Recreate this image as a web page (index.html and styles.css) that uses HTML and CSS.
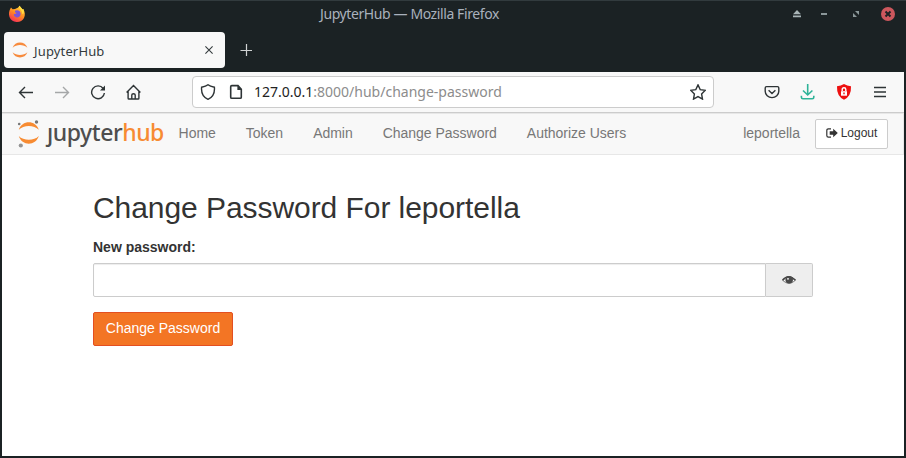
FILE: index.html
```html
<!DOCTYPE html>
<html lang="en">
<head>
<meta charset="utf-8">
<title>JupyterHub</title>
<link rel="stylesheet" href="styles.css">
</head>
<body>
<div class="window">
  <header class="titlebar">
    <svg class="firefox" width="18" height="18" viewBox="0 0 18 18">
      <defs><linearGradient id="fire" x1="0.8" y1="0" x2="0.25" y2="1"><stop offset="0" stop-color="#ffdf3c"/><stop offset=".5" stop-color="#ff8c22"/><stop offset="1" stop-color="#f52b58"/></linearGradient></defs>
      <path d="M2.2 4 3 2.6 4.6 4.2 7 4 9.8 2.8 11.7.8C12 3 14 3.6 14.6 4.4L15.3 4C17 7 17.4 10 16 13A8 7.6 0 0 1 1.5 12C.5 9 1 6 2.2 4Z" fill="url(#fire)"/>
      <path d="M7 5.8C9 4.6 12.6 5.4 12.6 8.8 12.6 12 9.8 13 8 12.2 6.4 11.5 5.4 10 6 9 7 9.2 8 8.8 8.6 7.9L7 7.2Z" fill="#7b54d8"/>
      <path d="M11 1.5C11.2 4 14.5 5 14.3 9 15.8 9 16.4 7 15.3 4L14.6 4.4 11.7.8Z" fill="#ffe043"/>
    </svg>
    <div class="window-title">JupyterHub — Mozilla Firefox</div>
    <div class="controls">
      <svg width="10" height="10" viewBox="0 0 10 10" fill="#a9b5b7"><path d="M5 1 9 5.3H1ZM1 6.4h8v1.8H1Z"/></svg>
      <svg width="8" height="10" viewBox="0 0 8 10" fill="#8b9799"><path d="M1 4h6v2H1Z"/></svg>
      <svg width="8" height="10" viewBox="0 0 8 10" fill="#8b9799"><path d="M3 2h4v4ZM1 4l4 4H1Z"/></svg>
      <svg width="14" height="14" viewBox="0 0 14 14"><circle cx="7" cy="7" r="7" fill="#cc575d"/><path d="m4.5 4.5 5 5m0-5-5 5" stroke="#1b2224" stroke-width="2"/></svg>
    </div>
  </header>
  <div class="tabs">
    <div class="tab">
      <svg width="16" height="16" viewBox="0 0 16 16" fill="#f78b3d"><path d="M.6 5.7C2.8-1.2 13.2-1.2 15.4 5.7 11.5 2.2 4.5 2.2.6 5.7ZM.6 10.3C2.8 17.2 13.2 17.2 15.4 10.3 11.5 13.8 4.5 13.8.6 10.3Z"/></svg>
      <span class="tab-title">JupyterHub</span>
      <svg width="8" height="8" viewBox="0 0 8 8" fill="none" stroke="#343b3d" stroke-width="1.1"><path d="m.4.4 7.2 7.2m0-7.2L.4 7.6"/></svg>
    </div>
    <svg class="new-tab" width="12" height="12" viewBox="0 0 12 12" stroke="#d0d3d3" stroke-width="1.2"><path d="M6.5 0v12M.5 6.5h11.5"/></svg>
  </div>
  <div class="toolbar">
    <span class="tool"><svg width="16" height="16" viewBox="0 0 16 16"><path d="M15 8.5H1.6M7 3 1.5 8.5 7 14"/></svg></span>
    <span class="tool disabled"><svg width="16" height="16" viewBox="0 0 16 16"><path d="M1 8.5h13.4M9 3l5.5 5.5L9 14"/></svg></span>
    <span class="tool"><svg width="16" height="16" viewBox="0 0 16 16"><path d="M13.2 4.5A6.4 6.4 0 1 0 14.4 9"/><path class="solid" d="M15 1.5v5H10Z"/></svg></span>
    <span class="tool"><svg width="16" height="16" viewBox="0 0 16 16"><path d="M.6 8.4 7.5 1.5l6.9 6.9M2.1 7v7.2q0 .8.8.8h9.2q.8 0 .8-.8V7M5.8 15v-4q0-1.2 1.7-1.2t1.7 1.2v4"/></svg></span>
    <div class="urlbar">
      <svg width="16" height="16" viewBox="0 0 16 16"><path d="M8 .8Q10 2.5 14.4 3.2 15.2 12 8 15.3.8 12 1.6 3.2 6 2.5 8 .8Z"/></svg>
      <svg class="page-icon" width="14" height="16" viewBox="0 0 14 16"><path stroke-width="1.6" d="M9 1.6H2.8Q1.7 1.6 1.7 2.7v10.5q0 1.1 1.1 1.1h8.4q1.1 0 1.1-1.1V5.4Z"/><path class="solid" d="M8.4 1.5V6h4.2Z"/></svg>
      <span class="url"><b>127.0.0.1</b>:8000/hub/change-password</span>
      <svg width="16" height="16" viewBox="0 0 16 16"><path d="m8 .9 2.2 4.7 5.1.7-3.7 3.6.9 5.2L8 12.6l-4.5 2.5.9-5.2L.7 6.3l5.1-.7Z"/></svg>
    </div>
    <span class="tool"><svg width="16" height="16" viewBox="0 0 16 16"><path d="M2.5 2.6h11q1.3 0 1.3 1.3v3.3A6.8 6.4 0 0 1 1.2 7.2V3.9q0-1.3 1.3-1.3ZM4.6 6.3 8 9.5l3.4-3.2"/></svg></span>
    <span class="tool download"><svg width="16" height="16" viewBox="0 0 16 16"><path d="M7.7 0v11M3 6.5 7.7 11l4.7-4.5M1.4 11.7v1.6q0 1.5 1.5 1.5h9.4q1.5 0 1.5-1.5v-1.6"/></svg></span>
    <span class="tool"><svg width="16" height="16" viewBox="0 0 16 16"><path d="M8 0Q11 2 15 2.2 15.5 12 8 15.8.5 12 1 2.2 5 2 8 0Z" fill="#ed1010" stroke="none"/><path d="M5 7.2h6v4.5H5Z" fill="#fff" stroke="none"/><path d="M6.2 7V5.5a1.8 1.8 0 0 1 3.6 0V7" stroke="#fff"/><path d="M8 8.5v1.8" stroke="#ed1010"/></svg></span>
    <span class="tool"><svg width="16" height="16" viewBox="0 0 16 16"><path d="M2 3.5h12M2 8h12M2 12.5h12"/></svg></span>
  </div>
  <nav class="navbar">
    <div class="brand">
      <svg width="24" height="30" viewBox="0 0 24 30">
        <path fill="#f78b32" d="M1.8 10.8C4.8.6 18.8.6 21.8 10.8 17.2 5.7 6.4 5.7 1.8 10.8ZM1.8 17C4.8 27.2 18.8 27.2 21.8 17 17.2 22.1 6.4 22.1 1.8 17Z"/>
        <circle cx="2.2" cy="5" r="1.3" fill="#777"/><circle cx="19.5" cy="3" r="1.7" fill="#777"/><circle cx="3.8" cy="26.5" r="2.1" fill="#949494"/>
      </svg>
      <span class="wordmark">ȷupyter<b>hub</b></span>
    </div>
    <div class="links"><a>Home</a><a>Token</a><a>Admin</a><a>Change Password</a><a>Authorize Users</a></div>
    <span class="user">leportella</span>
    <button class="logout"><svg width="12" height="10" viewBox="0 0 12 10"><path d="M5 .8H2.4Q.8.8.8 2.4v5.2q0 1.6 1.6 1.6H5" fill="none" stroke="#333" stroke-width="1.2"/><path d="M3.7 3.3h3.5V.8L11.8 5 7.2 9.2V6.7H3.7Z" fill="#333"/></svg><span>Logout</span></button>
  </nav>
  <main>
    <h1>Change Password For leportella</h1>
    <label for="password">New password:</label>
    <div class="input-group">
      <input id="password" type="password">
      <span class="addon"><svg width="14" height="10" viewBox="0 0 14 10"><path d="M.6 5.3Q6.5-2 13.4 5.3 7 11.5.6 5.3Z" fill="#fafafa" stroke="#666" stroke-width=".8"/><path d="M.6 5.1Q6.5-1.6 13.4 5.1" fill="none" stroke="#444" stroke-width="1.6"/><circle cx="7.2" cy="4.8" r="3.8" fill="#4a4a4a"/><circle cx="6" cy="3.8" r=".9" fill="#fff"/></svg></span>
    </div>
    <button class="submit">Change Password</button>
  </main>
</div>
</body>
</html>
```
FILE: styles.css
```css
* { box-sizing: border-box; }
body { margin: 0; background: #1b2224; font-family: "Liberation Sans", Arial, sans-serif; font-size: 14px; color: #333; }
svg { display: block; flex: none; }
.window { width: 906px; height: 458px; padding: 0 2px 2px; border-top: 1px solid #323b3e; display: flex; flex-direction: column; }
.titlebar { height: 26px; flex: none; display: grid; grid-template-columns: 100px 1fr 110px; align-items: center; padding: 0 9px 0 6px; }
.window-title { font: 14px/20px "Noto Sans", sans-serif; letter-spacing: -0.4px; color: #a9b1bc; text-align: center; padding-right: 74px; }
.controls { display: flex; align-items: center; justify-content: flex-end; gap: 21px; }
.controls svg:nth-child(1) { margin-right: 1px; }
.controls svg:nth-child(2) { margin-left: -4px; }
.controls svg:nth-child(3) { margin-left: 3px; }
.tabs { height: 45px; flex: none; padding: 5px 2px 4px; display: flex; align-items: center; gap: 15px; }
.tab { width: 221px; height: 36px; background: #f8f8f8; border-radius: 4px; display: flex; align-items: center; padding: 0 12px 0 8px; gap: 6px; }
.tab-title { flex: 1; font: 13px/18px "Noto Sans", sans-serif; letter-spacing: 0.15px; padding-top: 2px; color: #343b3d; }
.toolbar { height: 41px; flex: none; background: #f8f8f8; border-bottom: 1px solid #ccc; display: flex; align-items: center; padding: 0 6px; }
.toolbar svg { fill: none; stroke: #2e3436; stroke-width: 1.4; }
.toolbar .solid { fill: #2e3436; stroke: none; }
.tool { width: 36px; display: flex; justify-content: center; }
.toolbar .disabled svg { stroke: #a5a7a8; }
.toolbar .download svg { stroke: #2eb398; stroke-width: 1.6; }
.urlbar { flex: 1; height: 32px; margin: 0 40px; border: 1px solid #ccc; border-radius: 4px; background: #fff; display: flex; align-items: center; padding: 0 7px; }
.page-icon { margin-left: 13px; }
.url { flex: 1; margin-left: 11px; font: 14px/20px "Noto Sans", sans-serif; color: #8c8c8c; }
.url b { font-weight: 400; color: #222; }
.navbar { height: 42px; flex: none; background: #f8f8f8; border: 1px solid #e7e7e7; border-width: 1px 1px 1px 0; display: flex; align-items: center; padding: 0 15px; color: #777; }
.brand { width: 147px; display: flex; align-items: center; gap: 6px; }
.wordmark { font: 500 23px/32px "Noto Sans", sans-serif; letter-spacing: -0.45px; padding-bottom: 5px; color: #4e4e4e; }
.wordmark b { font-weight: inherit; color: #f78b32; }
.links { display: flex; gap: 30px; padding: 0 0 2px 14.6px; letter-spacing: -0.02px; }
.user { margin-left: auto; margin-right: 15px; padding-bottom: 2px; }
.logout { width: 73px; height: 30px; border: 1px solid #ccc; border-radius: 2px; background: #fff; color: #333; font: 12px/18px "Liberation Sans", sans-serif; display: flex; align-items: center; justify-content: center; gap: 3px; padding: 0 0 2px; }
main { flex: 1; background: #fff; padding: 36px 91px 0; }
h1 { margin: 0 0 13px; font-size: 30px; line-height: 33px; font-weight: 400; letter-spacing: -0.06px; white-space: nowrap; }
label { display: block; line-height: 20px; font-weight: 700; margin-bottom: 6px; }
.input-group { display: flex; width: 720px; height: 34px; }
input { flex: 1; border: 1px solid #ccc; border-radius: 2px 0 0 2px; box-shadow: inset 0 1px 1px rgba(0,0,0,.075); background: #fff; }
.addon { width: 47px; border: 1px solid #ccc; border-left: 0; border-radius: 0 2px 2px 0; background: #eee; display: flex; align-items: center; justify-content: center; }
.submit { margin-top: 15px; width: 140px; height: 34px; padding: 0 0 2px; border: 1px solid #e34f21; border-radius: 2px; background: #f37524; color: #fff; font: 14px/20px "Liberation Sans", sans-serif; display: block; }
```
